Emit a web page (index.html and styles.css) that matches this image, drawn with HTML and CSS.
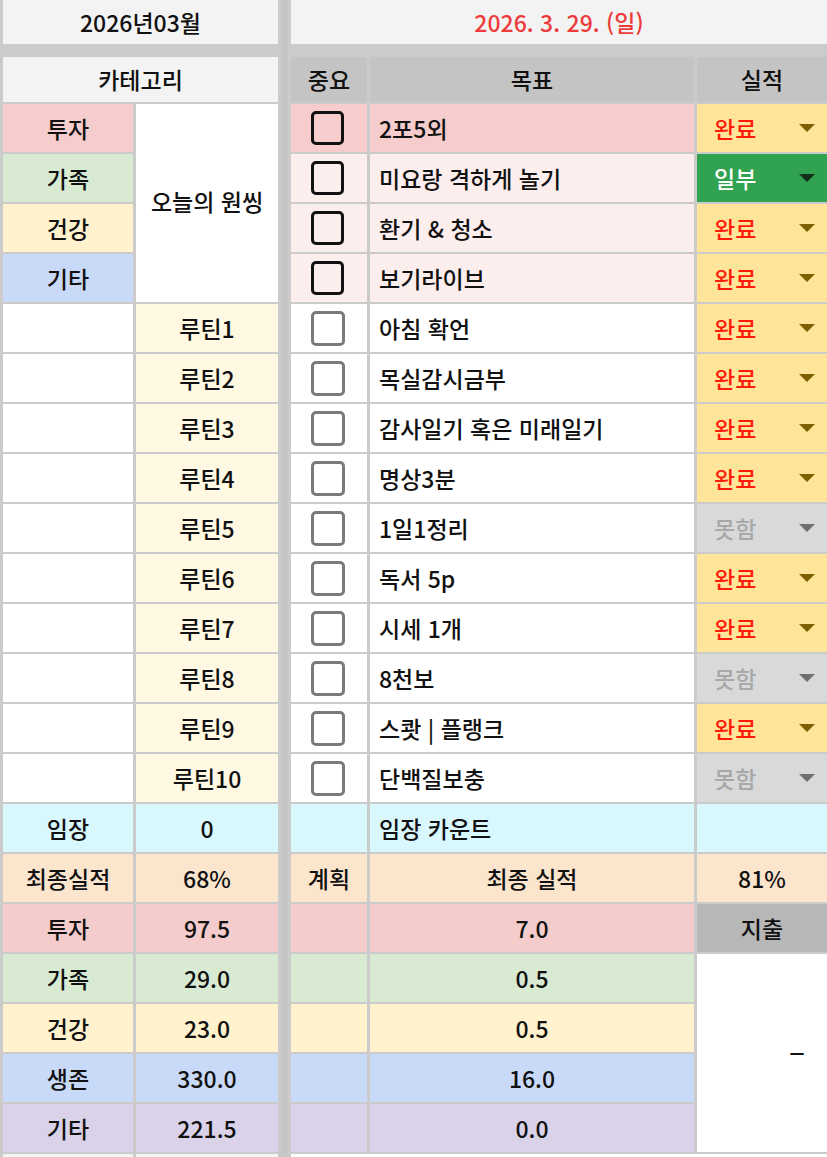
FILE: index.html
```html
<!DOCTYPE html>
<html lang="ko">
<head>
<meta charset="utf-8">
<title>2026년03월</title>
<link rel="stylesheet" href="styles.css">
</head>
<body>
<div class="sheet">
  <div class="sep"></div>
  <div class="spacer"></div>

  <div class="c head span2">2026년03월</div>
  <div class="c head date span3">2026. 3. 29. (일)</div>

  <div class="c head span2">카테고리</div>
  <div class="c th">중요</div>
  <div class="c th">목표</div>
  <div class="c th">실적</div>

  <div class="c pink">투자</div>
  <div class="c white onething">오늘의 원씽</div>
  <div class="c pink"><span class="chk bold"></span></div>
  <div class="c pink goal">2포5외</div>
  <div class="c dd done">완료<i class="arr"></i></div>

  <div class="c green">가족</div>
  <div class="c lpink"><span class="chk bold"></span></div>
  <div class="c lpink goal">미요랑 격하게 놀기</div>
  <div class="c dd part">일부<i class="arr"></i></div>

  <div class="c yellow">건강</div>
  <div class="c lpink"><span class="chk bold"></span></div>
  <div class="c lpink goal">환기 &amp; 청소</div>
  <div class="c dd done">완료<i class="arr"></i></div>

  <div class="c blue">기타</div>
  <div class="c lpink"><span class="chk bold"></span></div>
  <div class="c lpink goal">보기라이브</div>
  <div class="c dd done">완료<i class="arr"></i></div>

  <div class="c white"></div>
  <div class="c cream">루틴1</div>
  <div class="c white"><span class="chk"></span></div>
  <div class="c white goal">아침 확언</div>
  <div class="c dd done">완료<i class="arr"></i></div>

  <div class="c white"></div>
  <div class="c cream">루틴2</div>
  <div class="c white"><span class="chk"></span></div>
  <div class="c white goal">목실감시금부</div>
  <div class="c dd done">완료<i class="arr"></i></div>

  <div class="c white"></div>
  <div class="c cream">루틴3</div>
  <div class="c white"><span class="chk"></span></div>
  <div class="c white goal">감사일기 혹은 미래일기</div>
  <div class="c dd done">완료<i class="arr"></i></div>

  <div class="c white"></div>
  <div class="c cream">루틴4</div>
  <div class="c white"><span class="chk"></span></div>
  <div class="c white goal">명상3분</div>
  <div class="c dd done">완료<i class="arr"></i></div>

  <div class="c white"></div>
  <div class="c cream">루틴5</div>
  <div class="c white"><span class="chk"></span></div>
  <div class="c white goal">1일1정리</div>
  <div class="c dd fail">못함<i class="arr"></i></div>

  <div class="c white"></div>
  <div class="c cream">루틴6</div>
  <div class="c white"><span class="chk"></span></div>
  <div class="c white goal">독서 5p</div>
  <div class="c dd done">완료<i class="arr"></i></div>

  <div class="c white"></div>
  <div class="c cream">루틴7</div>
  <div class="c white"><span class="chk"></span></div>
  <div class="c white goal">시세 1개</div>
  <div class="c dd done">완료<i class="arr"></i></div>

  <div class="c white"></div>
  <div class="c cream">루틴8</div>
  <div class="c white"><span class="chk"></span></div>
  <div class="c white goal">8천보</div>
  <div class="c dd fail">못함<i class="arr"></i></div>

  <div class="c white"></div>
  <div class="c cream">루틴9</div>
  <div class="c white"><span class="chk"></span></div>
  <div class="c white goal">스쾃 | 플랭크</div>
  <div class="c dd done">완료<i class="arr"></i></div>

  <div class="c white"></div>
  <div class="c cream">루틴10</div>
  <div class="c white"><span class="chk"></span></div>
  <div class="c white goal">단백질보충</div>
  <div class="c dd fail">못함<i class="arr"></i></div>

  <div class="c cyan">임장</div>
  <div class="c cyan">0</div>
  <div class="c cyan"></div>
  <div class="c cyan goal">임장 카운트</div>
  <div class="c cyan"></div>

  <div class="c peach">최종실적</div>
  <div class="c peach">68%</div>
  <div class="c peach">계획</div>
  <div class="c peach">최종 실적</div>
  <div class="c peach">81%</div>

  <div class="c pink2">투자</div>
  <div class="c pink2">97.5</div>
  <div class="c pink2"></div>
  <div class="c pink2">7.0</div>
  <div class="c gray">지출</div>

  <div class="c green">가족</div>
  <div class="c green">29.0</div>
  <div class="c green"></div>
  <div class="c green">0.5</div>
  <div class="c white dash"><span class="dash-mark">–</span></div>

  <div class="c yellow">건강</div>
  <div class="c yellow">23.0</div>
  <div class="c yellow"></div>
  <div class="c yellow">0.5</div>

  <div class="c blue">생존</div>
  <div class="c blue">330.0</div>
  <div class="c blue"></div>
  <div class="c blue">16.0</div>

  <div class="c purple">기타</div>
  <div class="c purple">221.5</div>
  <div class="c purple"></div>
  <div class="c purple">0.0</div>

  <div class="c lgray"></div>
  <div class="c lgray"></div>
  <div class="c white span3"></div>
</div>
</body>
</html>
```

FILE: styles.css
```css
html, body {
  margin: 0;
  padding: 0;
}
body {
  background: #cbcbcb;
  font-family: "Noto Sans CJK KR", "Noto Sans", sans-serif;
  color: #111;
  overflow: hidden;
}
.sheet {
  display: grid;
  grid-template-columns: 130px 142px 7px 76px 324px 1fr;
  grid-template-rows: 44px 9px 45px repeat(22, 48px);
  column-gap: 3px;
  row-gap: 2px;
  padding-left: 3px;
  width: 824px;
  height: 1157px;
  overflow: hidden;
}
.sep {
  grid-column: 3;
  grid-row: 1 / -1;
  background: #c6c6c6;
}
.spacer {
  grid-column: 1 / -1;
  grid-row: 2;
}
.c {
  display: flex;
  align-items: center;
  justify-content: center;
  font-size: 23px;
  font-weight: 500;
  line-height: 1;
  white-space: nowrap;
  overflow: hidden;
}
.span2 { grid-column: span 2; }
.span3 { grid-column: span 3; }
.head { background: #f3f3f3; }
.date { color: #ee3b3b; }
.th { background: #c4c4c4; }
.onething { grid-row: span 4; padding-bottom: 4px; }
.goal {
  justify-content: flex-start;
  padding-left: 9px;
}
.white { background: #ffffff; }
.pink { background: #f6cccc; }
.pink2 { background: #f4cccc; }
.lpink { background: #fdeeee; }
.green { background: #d9ead3; }
.yellow { background: #fff2cc; }
.blue { background: #c9daf8; }
.purple { background: #d9d2e9; }
.cream { background: #fff8e3; }
.cyan { background: #d9f8fe; }
.peach { background: #fce5cd; }
.gray { background: #b7b7b7; }
.lgray { background: #f3f3f3; }

.chk {
  display: block;
  width: 28px;
  height: 29px;
  border: 3px solid #7a7a7a;
  border-radius: 5px;
  background: #fff;
  margin-left: -3px;
}
.chk.bold {
  border-color: #111;
  border-width: 3.5px;
  width: 27px;
  height: 28px;
  background: transparent;
}

.dd {
  justify-content: flex-start;
  padding-left: 17px;
}
.arr {
  display: block;
  width: 0;
  height: 0;
  margin-left: auto;
  margin-right: 12px;
  border-left: 8px solid transparent;
  border-right: 8px solid transparent;
  border-top: 8px solid #7f6000;
}
.done { background: #ffe599; color: #ff1a0a; }
.part { background: #31a24f; color: #ffffff; }
.part .arr { border-top-color: #13301c; }
.fail { background: #d9d9d9; color: #a8a8a8; }
.fail .arr { border-top-color: #6f6f6f; }

.dash {
  grid-row: span 4;
  justify-content: flex-end;
  padding-right: 22px;
  padding-bottom: 8px;
}
.dash-mark {
  font-size: 30px;
  font-weight: 400;
}
```
